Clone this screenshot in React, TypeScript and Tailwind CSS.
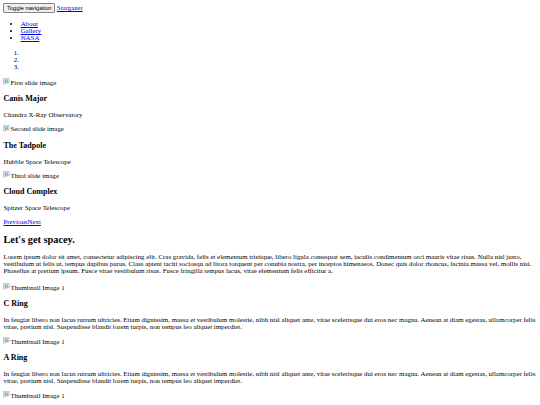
import React from 'react';

interface Slide {
  alt: string;
  title: string;
  credit: string;
}

const slides: Slide[] = [
  { alt: 'First slide image', title: 'Canis Major', credit: 'Chandra X-Ray Observatory' },
  { alt: 'Second slide image', title: 'The Tadpole', credit: 'Hubble Space Telescope' },
  { alt: 'Third slide image', title: 'Cloud Complex', credit: 'Spitzer Space Telescope' },
];

const rings = ['C Ring', 'A Ring'];

const intro =
  'Lorem ipsum dolor sit amet, consectetur adipiscing elit. Cras gravida, felis et elementum tristique, libero ligula consequat sem, iaculis condimentum orci mauris vitae risus. Nulla nisl justo, vestibulum ut felis ut, tempus dapibus purus. Class aptent taciti sociosqu ad litora torquent per conubia nostra, per inceptos himenaeos. Donec quis dolor rhoncus, lacinia massa vel, mollis nisi. Phasellus at pretium ipsum. Fusce vitae vestibulum risus. Fusce fringilla tempus lacus, vitae elementum felis efficitur a.';

const ringText =
  'In feugiat libero non lacus rutrum ultricies. Etiam dignissim, massa et vestibulum molestie, nibh nisl aliquet ante, vitae scelerisque dui eros nec magna. Aenean at diam egestas, ullamcorper felis vitae, pretium nisl. Suspendisse blandit lorem turpis, non tempus leo aliquet imperdiet.';

const linkCls = 'text-[#0000ee] underline';

// image that failed to load: little torn picture icon followed by its alt text
const BrokenImage: React.FC<{ alt: string }> = ({ alt }) => (
  <span className="inline-flex items-center">
    <svg width="7" height="7" viewBox="0 0 16 16" className="-mt-[1px] shrink-0">
      <path d="M1 1h13v9l-2 2-2-1-2 2-2-1-2 2H1z" fill="#f3f3f3" stroke="#9a9a9a" strokeWidth="1.2" />
      <rect x="3" y="3" width="9" height="5" fill="#8fc3ee" />
      <path d="M3 10l3-4 3 3 2-2 2 3z" fill="#5fae4a" />
    </svg>
    <span>{alt}</span>
  </span>
);

export default function App() {
  return (
    <div className="h-[405px] overflow-hidden bg-white p-[3.44px] font-['Liberation_Serif',serif] text-[6.88px] leading-[normal] text-black">
      <nav>
        <div>
          <button className="rounded-[1px] border border-[#858585] bg-[#efefef] px-[2.6px] py-[1px] align-middle font-['Liberation_Sans',sans-serif] text-[5.73px] leading-[normal] text-black">
            Toggle navigation
          </button>{' '}
          <a href="#" className={linkCls}>
            Stargazer
          </a>
        </div>
        <div>
          <ul className="mt-[6.88px] mb-[7.5px] list-disc pl-[17.2px]">
            <li>
              <a href="#" className={linkCls}>About</a>
            </li>
            <li>
              <a href="#" className={linkCls}>Gallery</a>
            </li>
            <li>
              <a href="#" className={linkCls}>NASA</a>
            </li>
          </ul>
        </div>
      </nav>

      {/* carousel, unstyled */}
      <div>
        <ol className="mt-[7.5px] mb-[8.9px] list-decimal pl-[17.2px]">
          <li></li>
          <li></li>
          <li></li>
        </ol>
        <div>
          {slides.map((s) => (
            <div key={s.alt}>
              <BrokenImage alt={s.alt} />
              <div>
                <h3 className="my-[8.05px] text-[8.05px] font-bold">{s.title}</h3>
                <p className="my-[6.88px]">{s.credit}</p>
              </div>
            </div>
          ))}
        </div>
        <a href="#" className={linkCls}>Previous</a>
        <a href="#" className={linkCls}>Next</a>
      </div>

      <div>
        <h2 className="my-[8.57px] text-[10.32px] font-bold">Let's get spacey.</h2>
        <p className="mt-[6.88px] mb-[9.5px]">{intro}</p>
        {rings.map((r) => (
          <div key={r}>
            <BrokenImage alt="Thumbnail Image 1" />
            <div>
              <h3 className="my-[8.05px] text-[8.05px] font-bold">{r}</h3>
              <p className="mt-[6.88px] mb-[7.5px]">{ringText}</p>
            </div>
          </div>
        ))}
        <BrokenImage alt="Thumbnail Image 1" />
      </div>
    </div>
  );
}
